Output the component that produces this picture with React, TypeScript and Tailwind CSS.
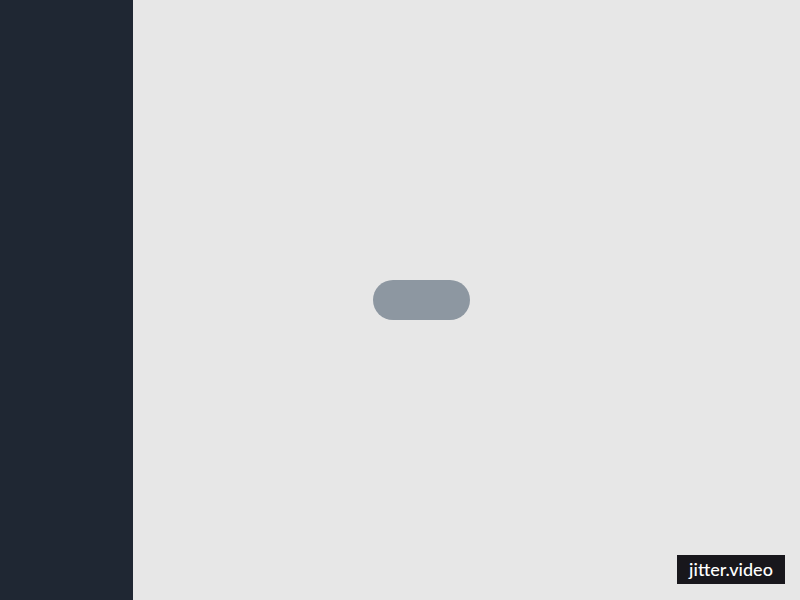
import React from 'react';

function App() {
  return (
    <div className="flex h-[600px] w-[800px] bg-[#e7e7e7]">
      <aside className="h-full w-[133px] shrink-0 bg-[#1f2733]" />
      <main className="relative flex flex-1 items-center">
        <div className="ml-[240px] h-[40px] w-[97px] rounded-full bg-[#8d97a1]" />
        <div
          className="absolute bottom-[16px] right-[15px] flex h-[29px] w-[108px] items-center justify-center bg-[#18171c] text-[18px] font-medium text-white"
          style={{ fontFamily: 'Lato, "Noto Sans", sans-serif' }}
        >
          jitter.video
        </div>
      </main>
    </div>
  );
}

export default App;
